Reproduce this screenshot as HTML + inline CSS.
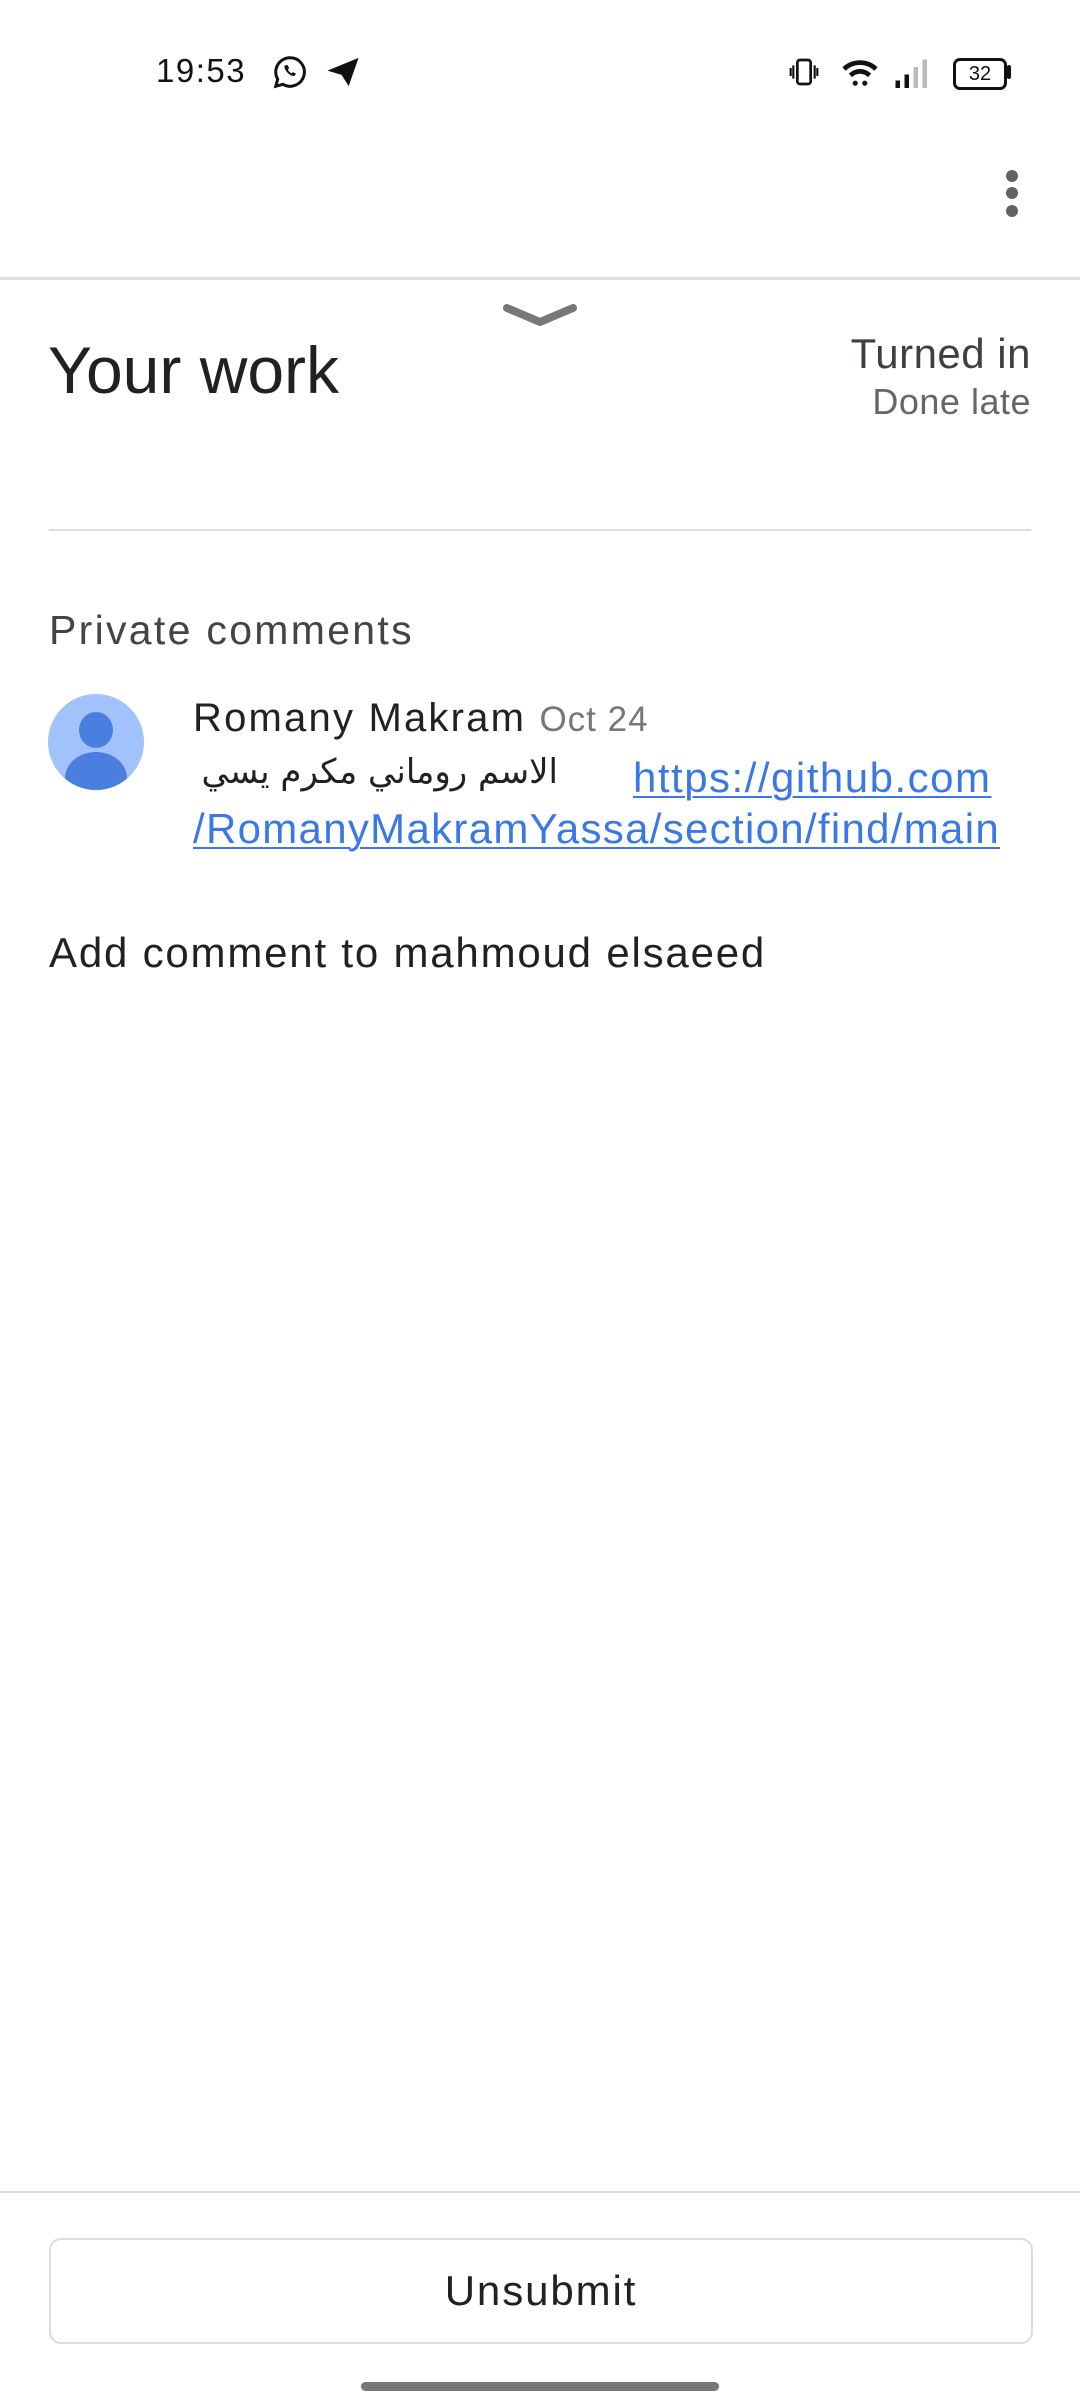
<!DOCTYPE html>
<html><head><meta charset="utf-8"><style>
html,body{margin:0;padding:0;background:#fff;}
body{width:1080px;height:2400px;position:relative;overflow:hidden;font-family:"Liberation Sans",sans-serif;color:#202124;}
.a{position:absolute;white-space:nowrap;}
a{color:#3b78e7;text-decoration:underline;text-decoration-thickness:2px;text-underline-offset:4px;}
</style></head><body>
<div class="a" style="left:156px;top:52px;font-size:33px;color:#111;letter-spacing:1.5px">19:53</div>
<svg class="a" style="left:272px;top:54px" width="36" height="36" viewBox="0 0 24 24"><path d="M12 2.5a9.5 9.5 0 0 0-8.2 14.3L2.5 21.5l4.8-1.3A9.5 9.5 0 1 0 12 2.5z" fill="none" stroke="#111" stroke-width="2"/><path d="M8.5 7.5c-.5 1 0 3 1.8 4.9s3.9 2.6 4.9 2l.8-1.3-2-1-1 .8c-1-.5-2-1.5-2.4-2.5l.8-1-1-2z" fill="#111"/></svg>
<svg class="a" style="left:326px;top:56px" width="34" height="32" viewBox="0 0 24 22"><path d="M1 10 L23 1 L16 21 L11 13 Z" fill="#111"/></svg>
<svg class="a" style="left:788px;top:56px" width="32" height="32" viewBox="0 0 24 24"><rect x="7" y="3" width="10" height="18" rx="2" fill="none" stroke="#111" stroke-width="2"/><path d="M4 7v10M2 9v6M20 7v10M22 9v6" stroke="#111" stroke-width="1.6"/></svg>
<svg class="a" style="left:840px;top:56px" width="40" height="32" viewBox="0 0 24 20"><path d="M1 7a16 16 0 0 1 22 0l-2 2.2a13 13 0 0 0-18 0z M5 11a10 10 0 0 1 14 0l-2 2.2a7 7 0 0 0-10 0z" fill="#111"/><circle cx="9" cy="17" r="1.6" fill="#111"/><circle cx="15" cy="17" r="1.6" fill="#111"/></svg>
<svg class="a" style="left:894px;top:58px" width="36" height="30" viewBox="0 0 24 20"><rect x="1" y="15" width="3" height="5" fill="#111"/><rect x="7" y="11" width="3" height="9" fill="#111"/><rect x="13" y="6" width="3" height="14" fill="#bbb"/><rect x="19" y="1" width="3" height="19" fill="#bbb"/></svg>
<div class="a" style="left:953px;top:58px;width:48px;height:26px;border:3px solid #111;border-radius:7px;font-size:20px;line-height:26px;text-align:center;color:#111;">32</div>
<div class="a" style="left:1007px;top:65px;width:4px;height:14px;background:#111;border-radius:2px"></div>
<div class="a" style="left:1006px;top:170px;width:12px;height:12px;border-radius:6px;background:#5f6368"></div>
<div class="a" style="left:1006px;top:187px;width:12px;height:12px;border-radius:6px;background:#5f6368"></div>
<div class="a" style="left:1006px;top:205px;width:12px;height:12px;border-radius:6px;background:#5f6368"></div>
<div class="a" style="left:0;top:277px;width:1080px;height:3px;background:#dedede"></div>
<svg class="a" style="left:503px;top:302px" width="74" height="26" viewBox="0 0 74 26"><path d="M4 6 L37 20 L70 6" fill="none" stroke="#777" stroke-width="8" stroke-linecap="round" stroke-linejoin="round"/></svg>
<div class="a" style="left:48px;top:332px;font-size:66px;color:#202124;">Your work</div>
<div class="a" style="right:49px;top:330px;font-size:42px;color:#3c4043;letter-spacing:0.5px">Turned in</div>
<div class="a" style="right:49px;top:381px;font-size:36px;color:#666;letter-spacing:0.5px">Done late</div>
<div class="a" style="left:49px;top:529px;width:982px;height:2px;background:#dadce0"></div>
<div class="a" style="left:49px;top:607px;font-size:41px;color:#444;letter-spacing:2.3px">Private comments</div>
<svg class="a" style="left:48px;top:694px" width="96" height="96" viewBox="0 0 96 96"><defs><clipPath id="c"><circle cx="48" cy="48" r="48"/></clipPath></defs><circle cx="48" cy="48" r="48" fill="#a1c2fa"/><g clip-path="url(#c)"><ellipse cx="48" cy="36" rx="17" ry="18" fill="#4a7fe0"/><ellipse cx="48" cy="84" rx="31" ry="26" fill="#4a7fe0"/></g></svg>
<div class="a" style="left:193px;top:696px;font-size:40px;color:#202124;letter-spacing:2.2px">Romany Makram <span style="color:#777;font-size:35px;letter-spacing:1px">Oct 24</span></div>
<div class="a" style="left:193px;top:752px;font-size:34px;color:#202124;font-family:'DejaVu Sans',sans-serif;direction:rtl;width:365px;text-align:right">الاسم روماني مكرم يسي</div>
<div class="a" style="left:633px;top:754px;font-size:42px;letter-spacing:1.5px"><a>https://github.com</a></div>
<div class="a" style="left:193px;top:805px;font-size:42px;letter-spacing:1.3px"><a>/RomanyMakramYassa/section/find/main</a></div>
<div class="a" style="left:49px;top:929px;font-size:42px;color:#202124;letter-spacing:1.8px">Add comment to mahmoud elsaeed</div>
<div class="a" style="left:0;top:2191px;width:1080px;height:2px;background:#dadce0"></div>
<div class="a" style="left:49px;top:2238px;width:980px;height:102px;border:2px solid #dadce0;border-radius:12px;text-align:center;line-height:102px;font-size:42px;color:#202124;letter-spacing:1.9px">Unsubmit</div>
<div class="a" style="left:361px;top:2382px;width:358px;height:9px;border-radius:5px;background:#777"></div>
</body></html>
